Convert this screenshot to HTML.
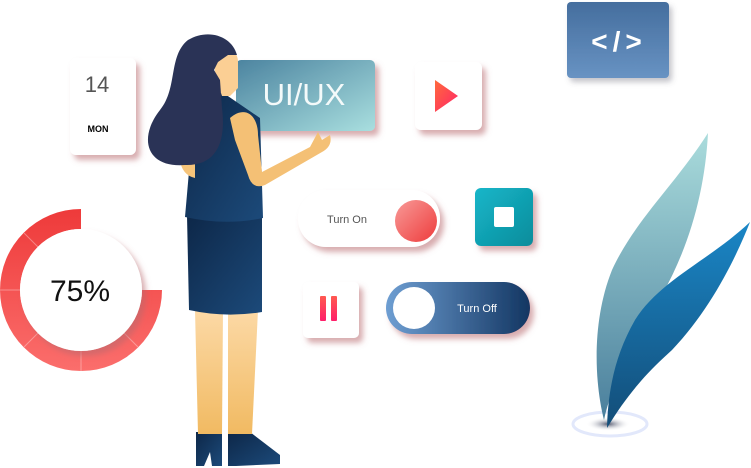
<!DOCTYPE html>
<html><head><meta charset="utf-8"><style>
html,body{margin:0;padding:0;background:#fff;width:751px;height:468px;overflow:hidden}
svg{display:block}
text{font-family:"Liberation Sans",sans-serif}
</style></head><body>
<svg width="751" height="468" viewBox="0 0 751 468" xmlns="http://www.w3.org/2000/svg">
<defs>
<filter id="sh" x="-30%" y="-30%" width="160%" height="160%"><feDropShadow dx="4" dy="5" stdDeviation="3" flood-color="#b86a6e" flood-opacity="0.55"/></filter>
<filter id="sh2" x="-30%" y="-30%" width="160%" height="160%"><feDropShadow dx="3" dy="4" stdDeviation="3" flood-color="#556" flood-opacity="0.35"/></filter>
<linearGradient id="uiux" x1="0" y1="0" x2="1" y2="1"><stop offset="0" stop-color="#4c84a0"/><stop offset="1" stop-color="#a9dfdf"/></linearGradient>
<linearGradient id="code" x1="0" y1="0" x2="0" y2="1"><stop offset="0" stop-color="#456e9e"/><stop offset="1" stop-color="#6893c3"/></linearGradient>
<linearGradient id="teal" x1="0" y1="0" x2="1" y2="1"><stop offset="0" stop-color="#14b6c9"/><stop offset="1" stop-color="#0e8c9b"/></linearGradient>
<linearGradient id="off" x1="0" y1="0" x2="1" y2="0"><stop offset="0" stop-color="#6e9ed2"/><stop offset="1" stop-color="#133662"/></linearGradient>
<linearGradient id="redb" x1="0" y1="0" x2="1" y2="1"><stop offset="0" stop-color="#f89a98"/><stop offset="1" stop-color="#ee3c3c"/></linearGradient>
<linearGradient id="pink" x1="0" y1="0" x2="0" y2="1"><stop offset="0" stop-color="#ff5a50"/><stop offset="1" stop-color="#ff1f6a"/></linearGradient>
<linearGradient id="play" x1="0" y1="0" x2="1" y2="1"><stop offset="0" stop-color="#ff6a3c"/><stop offset="1" stop-color="#ff2468"/></linearGradient>
<linearGradient id="ring" x1="0" y1="0" x2="0" y2="1"><stop offset="0" stop-color="#ee3a3a"/><stop offset="1" stop-color="#fb6e6c"/></linearGradient>
<linearGradient id="navy" x1="0" y1="0" x2="1" y2="1"><stop offset="0" stop-color="#0d2748"/><stop offset="1" stop-color="#1c4a7a"/></linearGradient>
<linearGradient id="skin" x1="0" y1="0" x2="0" y2="1"><stop offset="0" stop-color="#fcd9a6"/><stop offset="1" stop-color="#f1ba62"/></linearGradient>
<linearGradient id="leafL" x1="0" y1="0" x2="0" y2="1"><stop offset="0" stop-color="#aadcdc"/><stop offset="1" stop-color="#4a7f9c"/></linearGradient>
<linearGradient id="leafD" x1="0" y1="0" x2="0" y2="1"><stop offset="0" stop-color="#1a86c6"/><stop offset="1" stop-color="#134d78"/></linearGradient>
<radialGradient id="hole"><stop offset="0" stop-color="#555a70"/><stop offset="1" stop-color="#fff" stop-opacity="0"/></radialGradient>
</defs>

<rect x="70" y="58" width="66" height="97" rx="6" fill="#fff" filter="url(#sh)"/>
<text x="97" y="92" font-size="22" fill="#555" text-anchor="middle">14</text>
<text x="98" y="132" font-size="9" font-weight="bold" fill="#000" text-anchor="middle">MON</text>

<rect x="236" y="60" width="139" height="71" rx="5" fill="url(#uiux)" filter="url(#sh)"/>
<text x="304" y="105" font-size="31" fill="#f4fafa" text-anchor="middle">UI/UX</text>

<rect x="415" y="62" width="67" height="68" rx="6" fill="#fff" filter="url(#sh)"/>
<path d="M435 80 L458 96 L435 112 Z" fill="url(#play)"/>

<rect x="567" y="2" width="102" height="76" rx="4" fill="url(#code)" filter="url(#sh2)"/>
<text x="619" y="51" font-size="28" font-weight="bold" fill="#fff" text-anchor="middle" letter-spacing="5">&lt;/&gt;</text>

<rect x="298" y="190" width="142" height="57" rx="28" fill="#fff" filter="url(#sh)"/>
<text x="347" y="223" font-size="11" fill="#555" text-anchor="middle">Turn On</text>
<circle cx="416" cy="221" r="21" fill="url(#redb)"/>

<rect x="475" y="188" width="58" height="58" rx="6" fill="url(#teal)" filter="url(#sh)"/>
<rect x="494" y="207" width="20" height="20" rx="2" fill="#fff"/>

<rect x="303" y="282" width="56" height="56" rx="5" fill="#fff" filter="url(#sh)"/>
<rect x="320" y="296" width="6" height="25" rx="1" fill="url(#pink)"/>
<rect x="331" y="296" width="6" height="25" rx="1" fill="url(#pink)"/>

<rect x="386" y="282" width="144" height="52" rx="26" fill="url(#off)" filter="url(#sh)"/>
<circle cx="414" cy="308" r="21" fill="#fff"/>
<text x="477" y="312" font-size="11" fill="#fff" text-anchor="middle">Turn Off</text>

<path d="M81 209 A81 81 0 1 0 162 290 L142 290 A61 61 0 1 1 81 229 Z" fill="url(#ring)"/>
<g stroke="#fff" stroke-opacity="0.35" stroke-width="1">
<line x1="0" y1="290" x2="20" y2="290"/><line x1="81" y1="351" x2="81" y2="371"/>
<line x1="24" y1="233" x2="38" y2="247"/><line x1="24" y1="347" x2="38" y2="333"/><line x1="124" y1="333" x2="138" y2="347"/>
</g>
<circle cx="81" cy="290" r="61" fill="#fff" filter="url(#sh)"/>
<text x="80" y="301" font-size="30" fill="#111" text-anchor="middle">75%</text>

<ellipse cx="610" cy="424" rx="37" ry="12" fill="none" stroke="#e2e8fb" stroke-width="3"/>
<ellipse cx="608" cy="424" rx="22" ry="7" fill="url(#hole)"/>
<path d="M708 133 C675 185 635 220 612 270 C592 320 594 380 604 420 C612 380 640 335 662 295 C690 245 705 190 708 133 Z" fill="url(#leafL)"/>
<path d="M750 222 C710 260 660 280 635 320 C615 355 608 390 607 428 C630 390 650 370 672 350 C710 310 735 260 750 222 Z" fill="url(#leafD)"/>

<path d="M196 432 L222 432 L222 466 L212 466 L210 452 L204 466 L196 466 Z" fill="url(#navy)"/>
<path d="M228 432 L250 432 L280 455 L280 464 L236 466 L228 466 Z" fill="url(#navy)"/>
<path d="M195 310 L223 310 L222 434 L198 434 Z" fill="url(#skin)"/>
<path d="M228 310 L258 310 L252 434 L228 434 Z" fill="url(#skin)"/>
<path d="M187 215 L262 215 L262 312 Q225 318 189 310 Z" fill="url(#navy)"/>
<path d="M222 92 L260 118 L263 218 Q225 226 185 217 L190 160 L200 110 Z" fill="url(#navy)"/>
<path d="M180 145 L195 150 L195 178 Q182 175 180 160 Z" fill="#f6c47a"/>
<path d="M230 118 C245 105 258 115 258 135 L262 172 L310 147 L318 132 L322 140 L330 135 Q333 146 322 152 L265 185 Q252 190 248 175 L235 140 Z" fill="#f4c075"/>
<path d="M214 48 C226 44 238 50 238 62 L238 88 L230 96 L222 96 L215 75 Z" fill="#fbcf94"/>
<path d="M237 55 C232 36 208 28 188 40 C168 56 178 88 160 110 C138 138 146 168 185 165 C218 166 226 140 222 108 L220 80 L214 70 L218 62 L228 55 Z" fill="#2a3356"/>
</svg>
</body></html>
